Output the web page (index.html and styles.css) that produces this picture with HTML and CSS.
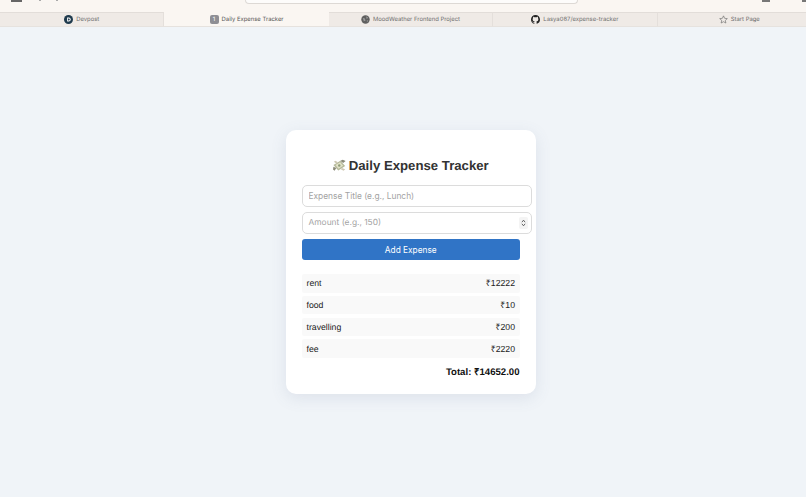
FILE: index.html
```html
<!DOCTYPE html>
<html lang="en">
<head>
    <meta charset="UTF-8">
    <title>Daily Expense Tracker</title>
    <link rel="stylesheet" href="styles.css">
</head>
<body>

<div class="toolbar">
    <div class="side-btn"></div>
    <div class="nav-dot first"></div>
    <div class="nav-dot"></div>
    <div class="url-bar"></div>
    <div class="tool-btn"></div>
    <div class="tool-dot"></div>
</div>

<div class="tabs">
    <div class="tab">
        <svg class="tab-icon" viewBox="0 0 16 16"><circle cx="8" cy="8" r="8" fill="#1f3a4d"/><path d="M5.5 4.5h3a3.5 3.5 0 0 1 0 7h-3z" fill="#fff"/><path d="M7.2 6.2h1.2a1.8 1.8 0 0 1 0 3.6H7.2z" fill="#1f3a4d"/></svg>
        <span>Devpost</span>
    </div>
    <div class="tab active">
        <span class="tab-num">1</span>
        <span>Daily Expense Tracker</span>
    </div>
    <div class="tab">
        <svg class="tab-icon" viewBox="0 0 16 16"><circle cx="8" cy="8" r="7.5" fill="#5f5f5f"/><path d="M3 5l4 1 1 4-3 1zM9 2l4 3-3 2zM10 10l3-1-2 4z" fill="#9a9a9a"/></svg>
        <span>MoodWeather Frontend Project</span>
    </div>
    <div class="tab">
        <svg class="tab-icon" viewBox="0 0 16 16"><path fill="#222" d="M8 0C3.58 0 0 3.58 0 8c0 3.54 2.29 6.53 5.47 7.59.4.07.55-.17.55-.38 0-.19-.01-.82-.01-1.49-2.01.37-2.53-.49-2.69-.94-.09-.23-.48-.94-.82-1.13-.28-.15-.68-.52-.01-.53.63-.01 1.08.58 1.23.82.72 1.21 1.87.87 2.33.66.07-.52.28-.87.51-1.07-1.78-.2-3.64-.89-3.64-3.95 0-.87.31-1.59.82-2.15-.08-.2-.36-1.02.08-2.12 0 0 .67-.21 2.2.82.64-.18 1.32-.27 2-.27s1.36.09 2 .27c1.53-1.04 2.2-.82 2.2-.82.44 1.1.16 1.92.08 2.12.51.56.82 1.27.82 2.15 0 3.07-1.87 3.75-3.65 3.95.29.25.54.73.54 1.48 0 1.07-.01 1.93-.01 2.2 0 .21.15.46.55.38A8.01 8.01 0 0 0 16 8c0-4.42-3.58-8-8-8z"/></svg>
        <span>Lasya087/expense-tracker</span>
    </div>
    <div class="tab">
        <svg class="tab-icon" viewBox="0 0 16 16"><path d="M8 1.500l2 4.400 4.800.5-3.600 3.200 1 4.700L8 11.900l-4.200 2.400 1-4.700L1.200 6.400 6 5.900z" fill="none" stroke="#666" stroke-width="1.100"/></svg>
        <span>Start Page</span>
    </div>
</div>

<div class="page">
    <div class="card">
        <h2 class="title">
            <svg class="money" viewBox="0 0 16 14">
                <path d="M0.500 6.500L9 1l6 6.500L6.500 13z" fill="#b5b99a"/>
                <path d="M3 6.500L8.800 3l3.700 4.200L6.700 11z" fill="#e2e2c8"/>
                <circle cx="7.700" cy="7" r="1.500" fill="#8f9c78"/>
                <path d="M9 1l3-1 3.500 1.500-3 2.500zM0.500 8.500l3.500 1.500-2 3.500-2-1.500z" fill="#8b8a78"/>
                <path d="M3 1l3 2-2 1.500-3-2zM11 10l4 1.500-2 2-3.500-2z" fill="#cfc8b4"/>
            </svg>
            <span>Daily Expense Tracker</span>
        </h2>
        <input class="field" type="text" placeholder="Expense Title (e.g., Lunch)">
        <div class="field number">
            <span class="placeholder">Amount (e.g., 150)</span>
            <span class="spin-box">
                <svg class="spinner" viewBox="0 0 6 10"><path d="M1 4l2-2.500L5 4M1 6l2 2.500L5 6" fill="none" stroke="#444" stroke-width="1"/></svg>
            </span>
        </div>
        <button class="add-btn">Add Expense</button>

        <ul class="list">
            <li><span>rent</span><span>₹12222</span></li>
            <li><span>food</span><span>₹10</span></li>
            <li><span>travelling</span><span>₹200</span></li>
            <li><span>fee</span><span>₹2220</span></li>
        </ul>
        <div class="total">Total: ₹14652.00</div>
    </div>
</div>

</body>
</html>
```

FILE: styles.css
```css
* {
    box-sizing: border-box;
}
html, body {
    height: 100%;
}
body {
    margin: 0;
    font-family: "Liberation Sans", Arial, sans-serif;
    text-rendering: geometricPrecision;
    background-color: #f0f4f8;
    color: #333;
    display: flex;
    flex-direction: column;
    overflow: hidden;
}
.toolbar {
    height: 12px;
    background-color: #faf6f2;
    display: flex;
    align-items: flex-start;
    padding-left: 11px;
}
.side-btn {
    width: 11px;
    height: 2px;
    background-color: #666;
}
.nav-dot {
    width: 2px;
    height: 1px;
    margin-left: 15px;
    background-color: #aaa;
}
.nav-dot.first {
    margin-left: 17px;
}
.url-bar {
    width: 333px;
    height: 4px;
    margin-left: 187px;
    background-color: #fdfcfb;
    border: 1px solid #ddd9d5;
    border-top: none;
    border-radius: 0 0 6px 6px;
}
.tool-btn {
    width: 8px;
    height: 2px;
    margin-left: 184px;
    background-color: #777;
}
.tool-dot {
    width: 4px;
    height: 2px;
    margin-left: 32px;
    background-color: #777;
}
.tabs {
    height: 15px;
    display: flex;
    overflow: hidden;
}
.tab {
    flex: none;
    width: 164.400px;
    display: flex;
    justify-content: center;
    align-items: center;
    gap: 3px;
    font-family: Inter, "Liberation Sans", sans-serif;
    font-size: 5.900px;
    color: #707070;
    background-color: #efeae6;
    border-top: 1px solid #e2ddd9;
    border-bottom: 1px solid #e6e2de;
    border-right: 1px solid #e4dfdb;
}
.tab.active {
    background-color: #faf6f2;
    border-top: none;
    border-right: none;
    color: #555;
}
.tab-icon {
    width: 9px;
    height: 9px;
}
.tab-num {
    width: 9px;
    height: 9px;
    background-color: #8e8e94;
    color: #fff;
    border-radius: 2px;
    text-align: center;
    font-size: 6px;
    line-height: 9px;
}
.page {
    flex: 1;
    display: flex;
    justify-content: center;
    padding-top: 103px;
    padding-left: 16px;
}
.card {
    width: 250px;
    height: 264px;
    background-color: #fff;
    border-radius: 10px;
    padding: 28px 16.500px 0 16px;
    box-shadow: 0 4px 16px rgba(90, 110, 150, 0.13);
}
.title {
    margin: 0 0 12px;
    font-size: 13.200px;
    line-height: 15px;
    font-weight: bold;
    display: flex;
    justify-content: center;
    align-items: center;
    gap: 3px;
    color: #333;
}
.money {
    width: 13px;
    height: 13px;
}
.field {
    display: flex;
    align-items: center;
    width: 229.500px;
    height: 22px;
    margin-bottom: 5px;
    padding: 0 5.500px;
    background-color: #fff;
    border: 1px solid #dcdcdc;
    border-radius: 5px;
    font-family: Inter, "Liberation Sans", sans-serif;
    font-size: 8.400px;
    color: #333;
    outline: none;
}
.field::placeholder, .placeholder {
    color: #a3a3a3;
}
.number {
    justify-content: space-between;
    padding-right: 3px;
}
.spin-box {
    display: flex;
    align-items: center;
    justify-content: center;
    width: 9px;
    height: 12px;
    background-color: #f4f4f4;
    border-radius: 2px;
}
.spinner {
    width: 5px;
    height: 8px;
}
.add-btn {
    display: block;
    width: 100%;
    height: 21px;
    background-color: #3074c6;
    color: #fff;
    border: none;
    border-radius: 3px;
    font-family: Inter, "Liberation Sans", sans-serif;
    font-size: 8.300px;
    padding: 0;
}
.list {
    list-style: none;
    margin: 14px 0 0;
    padding: 0;
    display: flex;
    flex-direction: column;
    gap: 3.300px;
}
.list li {
    height: 18.500px;
    display: flex;
    justify-content: space-between;
    align-items: center;
    padding: 0 4.500px;
    background-color: #f9f9f9;
    border-radius: 2px;
    font-size: 8.700px;
    color: #222;
}
.total {
    margin-top: 9px;
    text-align: right;
    font-size: 9.600px;
    line-height: 12px;
    font-weight: bold;
    color: #111;
}
```
